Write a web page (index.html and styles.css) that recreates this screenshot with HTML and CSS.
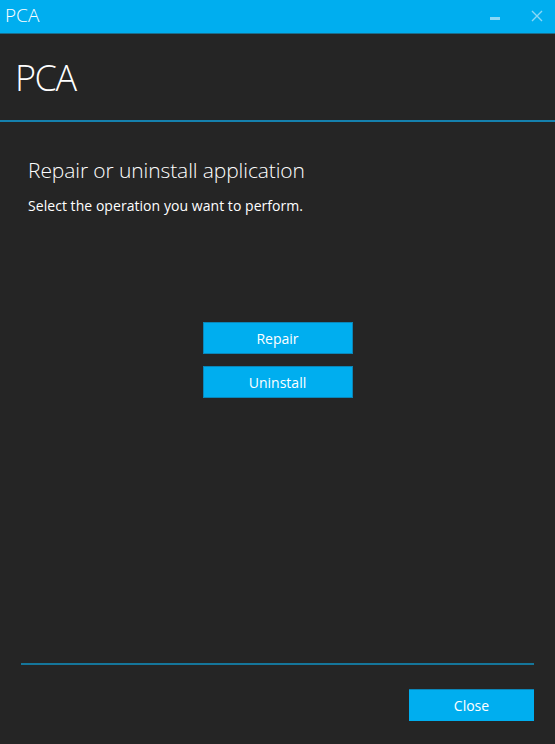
FILE: index.html
```html
<!DOCTYPE html>
<html>
<head>
<meta charset="utf-8">
<link rel="stylesheet" href="styles.css">
</head>
<body>
<div class="window">
  <div class="titlebar">
    <span class="title">PCA</span>
    <div class="controls">
      <span class="minimize"></span>
      <svg class="close-x" width="12" height="12" viewBox="0 0 12 12"><path d="M1 1 L11 11 M11 1 L1 11" stroke="#8ad8f6" stroke-width="1.4" fill="none"/></svg>
    </div>
  </div>
  <div class="header">
    <span class="app-name">PCA</span>
  </div>
  <div class="content">
    <h1 class="heading">Repair or uninstall application</h1>
    <p class="subtitle">Select the operation you want to perform.</p>
    <div class="actions">
      <button class="btn btn-action">Repair</button>
      <button class="btn btn-action">Uninstall</button>
    </div>
  </div>
  <div class="footer">
    <button class="btn btn-close">Close</button>
  </div>
</div>
</body>
</html>
```
FILE: styles.css
```css
html, body {
  margin: 0;
  padding: 0;
  background: #252525;
}
.window {
  width: 555px;
  height: 744px;
  display: flex;
  flex-direction: column;
  font-family: "Open Sans", "Noto Sans", sans-serif;
  color: #ffffff;
  background: #252525;
}
.titlebar {
  height: 33px;
  background: #00aeef;
  border-bottom: 1px solid #1b6d8c;
  display: flex;
  align-items: center;
  justify-content: space-between;
  padding: 0 12px 0 5px;
}
.title {
  font-size: 19px;
  font-weight: 300;
  line-height: 33px;
  margin-top: -2px;
}
.controls {
  display: flex;
  align-items: center;
  gap: 31px;
}
.minimize {
  width: 10px;
  height: 3px;
  background: #8ad8f6;
  margin-top: 4px;
}
.close-x {
  display: block;
  margin-top: -2px;
}
.header {
  height: 86px;
  border-bottom: 2px solid #1581ae;
  display: flex;
  align-items: center;
  padding-left: 15px;
}
.app-name {
  font-size: 36px;
  font-weight: 300;
  line-height: 40px;
  margin-top: 2px;
  letter-spacing: -1.5px;
}
.content {
  padding: 34px 28px 0 28px;
}
.heading {
  margin: 0;
  font-size: 21px;
  font-weight: 300;
  line-height: 28px;
  letter-spacing: -0.1px;
}
.subtitle {
  margin: 12px 0 0 0;
  font-size: 14px;
  line-height: 20px;
  letter-spacing: 0.05px;
}
.actions {
  display: flex;
  flex-direction: column;
  align-items: center;
  gap: 12px;
  margin-top: 106px;
}
.btn {
  background: #00aeef;
  color: #ffffff;
  border: 1px solid #0b86b8;
  font-family: "Open Sans", "Noto Sans", sans-serif;
  font-size: 14px;
  padding: 0;
  margin: 0;
  cursor: pointer;
}
.btn-action {
  width: 150px;
  height: 32px;
}
.footer {
  margin: auto 21px 0 21px;
  border-top: 2px solid #15769b;
  display: flex;
  justify-content: flex-end;
  padding: 24px 0 23px 0;
}
.btn-close {
  width: 125px;
  height: 32px;
  border-width: 1px 0 0 0;
}
```
